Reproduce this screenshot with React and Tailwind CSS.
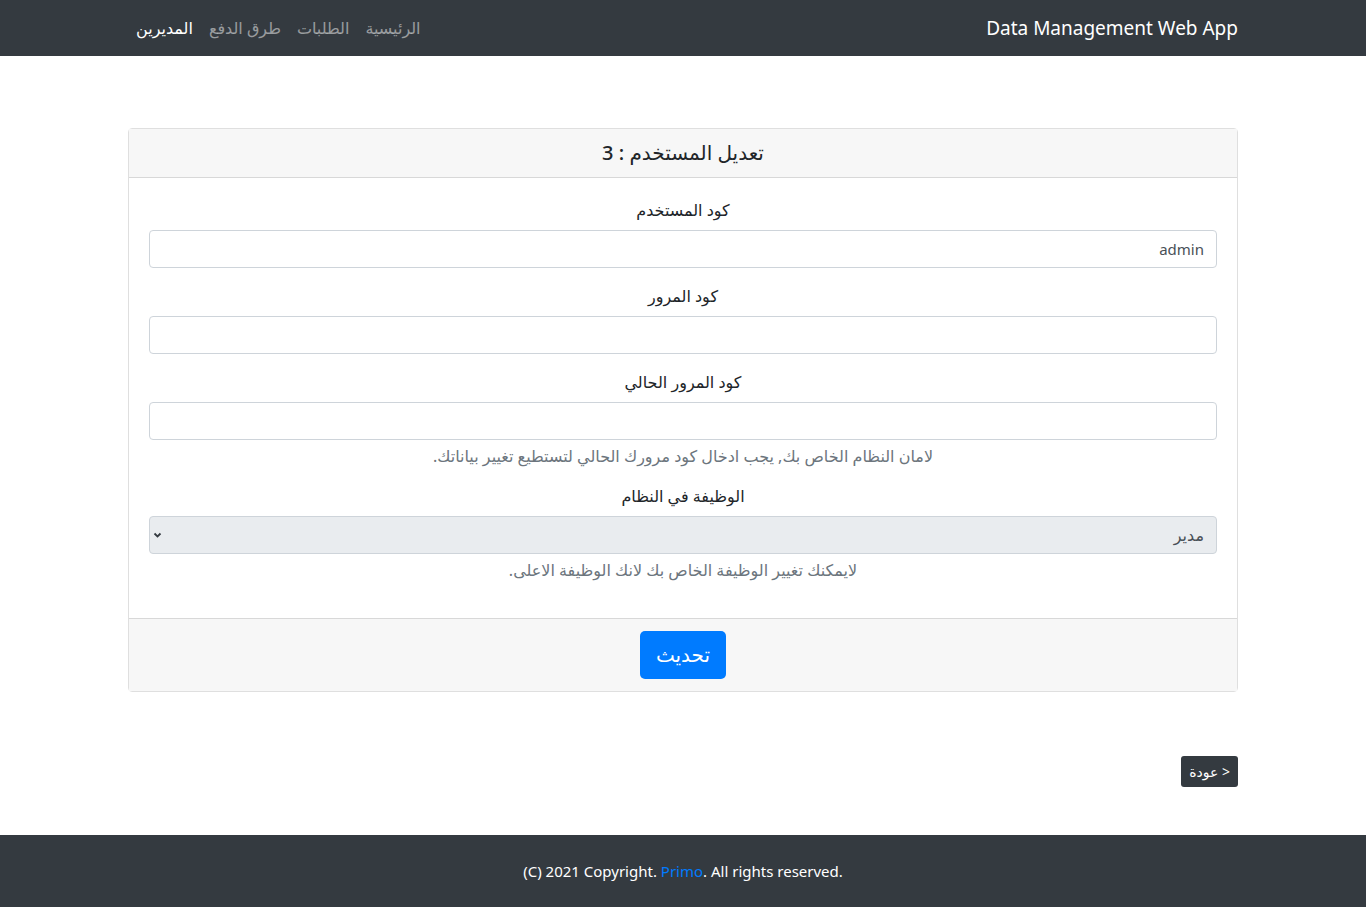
export default function App() {
  const font = { fontFamily: '"Noto Sans", "DejaVu Sans", sans-serif' };
  return (
    <div dir="rtl" className="flex min-h-screen flex-col bg-white text-[#212529]" style={font}>
      <nav className="h-14 bg-[#343a40]">
        <div className="mx-auto flex h-14 w-[1110px] items-center justify-between">
          <a href="#" className="text-[19px] leading-[30px] text-white" dir="ltr">
            Data Management Web App
          </a>
          <ul className="flex text-[16px] leading-6">
            <li><a href="#" className="block px-2 py-2 text-white/50">الرئيسية</a></li>
            <li><a href="#" className="block px-2 py-2 text-white/50">الطلبات</a></li>
            <li><a href="#" className="block px-2 py-2 text-white/50">طرق الدفع</a></li>
            <li><a href="#" className="block px-2 py-2 text-white">المديرين</a></li>
          </ul>
        </div>
      </nav>

      <main className="mx-auto w-[1110px] flex-1 pt-[72px] pb-12">
        <div className="rounded border border-black/[.125]">
          <div className="flex h-[49px] items-center justify-center border-b border-black/[.125] bg-[#f7f7f7]">
            <h5 className="text-[20px] font-medium leading-6">تعديل المستخدم : 3</h5>
          </div>
          <div className="p-5">
            <div className="mb-4">
              <label className="mb-2 block text-center text-[16px] leading-6">كود المستخدم</label>
              <input
                defaultValue="admin"
                className="block h-[38px] w-full rounded border border-[#ced4da] px-3 text-[15px] text-[#495057] outline-none"
              />
            </div>
            <div className="mb-4">
              <label className="mb-2 block text-center text-[16px] leading-6">كود المرور</label>
              <input type="password" className="block h-[38px] w-full rounded border border-[#ced4da] px-3 outline-none" />
            </div>
            <div className="mb-4">
              <label className="mb-2 block text-center text-[16px] leading-6">كود المرور الحالي</label>
              <input type="password" className="block h-[38px] w-full rounded border border-[#ced4da] px-3 outline-none" />
              <p className="mt-1 text-center text-[16px] leading-6 text-[#6c757d]">
                لامان النظام الخاص بك, يجب ادخال كود مرورك الحالي لتستطيع تغيير بياناتك.
              </p>
            </div>
            <div className="mb-4">
              <label className="mb-2 block text-center text-[16px] leading-6">الوظيفة في النظام</label>
              <div className="relative">
                <select
                  disabled
                  className="block h-[38px] w-full appearance-none rounded border border-[#ced4da] bg-[#e9ecef] px-3 text-[16px] text-[#495057] outline-none"
                >
                  <option>مدير</option>
                </select>
                <svg className="pointer-events-none absolute left-[4px] top-[15px]" width="9" height="8" viewBox="0 0 9 8">
                  <path d="M1.5 2.5L4.5 5.5L7.5 2.5" fill="none" stroke="#343a40" strokeWidth="1.8" />
                </svg>
              </div>
              <p className="mt-1 text-center text-[16px] leading-6 text-[#6c757d]">
                لايمكنك تغيير الوظيفة الخاص بك لانك الوظيفة الاعلى.
              </p>
            </div>
          </div>
          <div className="flex justify-center border-t border-black/[.125] bg-[#f7f7f7] px-5 py-3">
            <button className="h-12 rounded-[5px] bg-[#007bff] px-4 text-[20px] text-white">تحديث</button>
          </div>
        </div>

        <div className="mt-16 flex justify-start">
          <button className="h-[31px] rounded-[3px] bg-[#343a40] px-2 text-[14px] text-white">&lt; عودة</button>
        </div>
      </main>

      <footer className="flex h-[72px] items-center justify-center bg-[#343a40] text-[15px] text-white" dir="ltr">
        <p>
          (C) 2021 Copyright. <a href="#" className="text-[#007bff]">Primo</a>. All rights reserved.
        </p>
      </footer>
    </div>
  );
}
